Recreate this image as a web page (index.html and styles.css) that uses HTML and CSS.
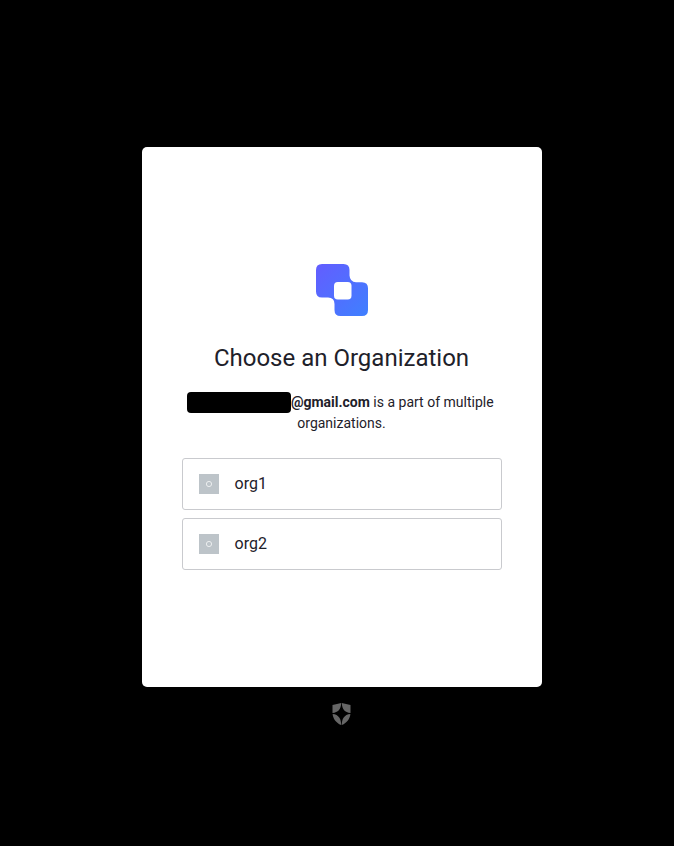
FILE: index.html
```html
<!DOCTYPE html>
<html lang="en">
<head>
<meta charset="utf-8">
<title>Choose an Organization</title>
<link rel="stylesheet" href="styles.css">
</head>
<body>
<main class="page">
  <section class="card">
    <svg class="logo" viewBox="0 0 52 52" aria-hidden="true">
      <defs>
        <linearGradient id="brand" x1="0" y1="0" x2="1" y2="1">
          <stop offset="0" stop-color="#635dff"/>
          <stop offset="1" stop-color="#3f80ff"/>
        </linearGradient>
      </defs>
      <path fill="url(#brand)" d="M6 0H27.500Q33.500 0 33.500 6V11.500Q34 18 40 18.300H46Q52 18.300 52 24.300V46Q52 52 46 52H24.500Q18.500 52 18.500 46V40Q18.500 33.500 12 33.500H6Q0 33.500 0 27.500V6Q0 0 6 0Z"/>
      <rect x="18" y="18" width="17.500" height="17.500" rx="3.800" fill="#fff"/>
    </svg>
    <h1 class="title">Choose an Organization</h1>
    <p class="description"><span class="redacted"></span><strong>@gmail.com</strong> is a part of multiple organizations.</p>
    <div class="organizations">
      <button class="organization" type="button">
        <svg class="avatar" viewBox="0 0 20 20" aria-hidden="true"><circle cx="10" cy="10" r="2.600"/></svg>
        <span>org1</span>
      </button>
      <button class="organization" type="button">
        <svg class="avatar" viewBox="0 0 20 20" aria-hidden="true"><circle cx="10" cy="10" r="2.600"/></svg>
        <span>org2</span>
      </button>
    </div>
  </section>
  <svg class="badge" viewBox="0 0 20 22" aria-hidden="true">
    <path d="M9.200 0C6.500 .5 3.500 1.300 .5 1.900V10C6.200 9.500 8.900 6.300 9.200 0ZM9.800 0C12.500 .5 15.500 1.300 18.500 1.900V10C12.800 9.500 10.100 6.300 9.800 0ZM.6 10.900C1 15.500 4 19.800 9.200 22C9.300 16 6.800 11.400 .6 10.900ZM18.400 10.900C18 15.500 15 19.800 9.800 22C9.700 16 12.200 11.400 18.400 10.900Z"/>
  </svg>
</main>
</body>
</html>
```

FILE: styles.css
```css
* {
  box-sizing: border-box;
}

body {
  margin: 0;
  background: #000;
  color: #1e212a;
  font-family: Roboto, "Liberation Sans", sans-serif;
}

.page {
  display: flex;
  flex-direction: column;
  align-items: center;
  min-height: 846px;
  padding: 147px 0 0 10px;
}

.card {
  display: flex;
  flex-direction: column;
  align-items: center;
  width: 400px;
  height: 540px;
  padding: 117px 40px 0;
  border-radius: 5px;
  background: #fff;
}

.logo {
  display: block;
  flex: none;
  width: 52px;
  height: 52px;
}

.title {
  margin: 24px 0 0;
  padding-right: 1px;
  font-size: 24px;
  font-weight: 400;
  line-height: 36px;
}

.description {
  width: 320px;
  margin: 16px 0 0;
  padding-right: 1px;
  font-size: 14px;
  line-height: 21px;
  text-align: center;
}

.redacted {
  display: inline-block;
  width: 104px;
  height: 21px;
  margin: 0 -0.5px 0 -2px;
  border-radius: 4px;
  background: #000;
  vertical-align: top;
}

.organizations {
  display: flex;
  flex-direction: column;
  gap: 8px;
  width: 100%;
  margin-top: 24px;
}

.organization {
  display: flex;
  align-items: center;
  gap: 15.5px;
  height: 52px;
  padding: 0 16px;
  border: 1px solid #c9cace;
  border-radius: 3px;
  background: #fff;
  color: #1e212a;
  font: 16px/24px Roboto, "Liberation Sans", sans-serif;
  text-align: left;
}

.avatar {
  width: 20px;
  height: 20px;
  background: #bdc4c9;
  fill: none;
  stroke: #eceeef;
  stroke-width: 1;
}

.badge {
  display: block;
  width: 20px;
  height: 22px;
  margin-top: 16px;
  fill: #666;
}
```
